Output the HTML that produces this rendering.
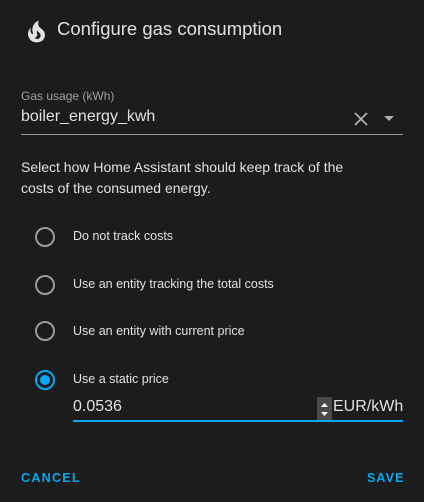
<!DOCTYPE html>
<html><head><style>
body{margin:0;width:424px;height:502px;background:#1c1c1c;font-family:"Liberation Sans",sans-serif;color:#e1e1e1;position:relative;overflow:hidden}
.a{position:absolute;white-space:nowrap}
.radio{position:absolute;left:35px;width:16px;height:16px;border:2px solid #9b9b9b;border-radius:50%}
.lab{position:absolute;left:73px;font-size:12.5px;color:#e1e1e1}
</style></head><body>
<svg class="a" style="left:22px;top:17px" width="29" height="29" viewBox="0 0 24 24"><path fill="#e1e1e1" d="M17.66 11.2c-.23-.3-.51-.56-.77-.82-.67-.6-1.430-1.030-2.070-1.660C13.33 7.26 13 4.85 13.95 3c-.95.23-1.780.75-2.490 1.320-2.590 2.080-3.610 5.750-2.390 8.900.04.1.08.2.08.33 0 .22-.15.42-.35.5-.23.1-.47.04-.66-.12a.58.58 0 0 1-.14-.17c-1.130-1.430-1.310-3.480-.55-5.120C5.780 10 4.870 12.300 5 14.470c.06.5.12 1 .29 1.500.14.6.41 1.200.71 1.730 1.080 1.730 2.950 2.970 4.960 3.220 2.140.27 4.430-.12 6.070-1.600 1.830-1.660 2.470-4.320 1.530-6.600l-.13-.26c-.21-.46-.77-1.260-.77-1.260m-3.160 6.300c-.28.24-.74.5-1.100.6-1.120.4-2.240-.16-2.900-.82 1.190-.28 1.900-1.160 2.110-2.050.17-.8-.15-1.460-.28-2.230-.12-.74-.1-1.370.17-2.060.19.38.39.76.63 1.060.77 1 1.980 1.440 2.240 2.800.04.14.06.28.06.43.03.82-.33 1.720-.93 2.270z"/></svg>
<div class="a" style="left:57px;top:18px;font-size:18.5px;color:#e1e1e1">Configure gas consumption</div>
<div class="a" style="left:21px;top:89px;font-size:12px;color:#a0a0a0">Gas usage (kWh)</div>
<div class="a" style="left:21px;top:108px;font-size:16px;color:#e1e1e1">boiler_energy_kwh</div>
<svg class="a" style="left:353px;top:111px" width="16" height="16" viewBox="0 0 16 16"><path d="M2 2L14 14M14 2L2 14" stroke="#b0b0b0" stroke-width="1.8"/></svg>
<svg class="a" style="left:384px;top:116px" width="10" height="6"><path d="M0 0H10L5 5Z" fill="#b0b0b0"/></svg>
<div class="a" style="left:21px;top:134px;width:382px;height:1px;background:#9a9a9a"></div>
<div class="a" style="left:21px;top:157px;font-size:14px;line-height:21px;white-space:normal;width:355px">Select how Home Assistant should keep track of the costs of the consumed energy.</div>
<div class="radio" style="top:227px"></div><div class="lab" style="top:229px">Do not track costs</div>
<div class="radio" style="top:275px"></div><div class="lab" style="top:277px">Use an entity tracking the total costs</div>
<div class="radio" style="top:321px"></div><div class="lab" style="top:324px">Use an entity with current price</div>
<div class="radio" style="top:370px;border-color:#03a9f4"><div style="position:absolute;left:3px;top:3px;width:10px;height:10px;border-radius:50%;background:#03a9f4"></div></div>
<div class="lab" style="top:372px">Use a static price</div>
<div class="a" style="left:73px;top:398px;font-size:16px;color:#e1e1e1">0.0536</div>
<div class="a" style="left:317px;top:397px;width:15px;height:24px;background:#4a4a4a"><svg width="15" height="24"><path d="M4 10L7.5 6L11 10Z M4 15L7.5 19L11 15Z" fill="#fff"/></svg></div>
<div class="a" style="left:333px;top:398px;font-size:16px;color:#e1e1e1">EUR/kWh</div>
<div class="a" style="left:73px;top:420px;width:330px;height:2px;background:#03a9f4"></div>
<div class="a" style="left:21px;top:471px;font-size:12.5px;font-weight:bold;letter-spacing:1.3px;color:#03a9f4">CANCEL</div>
<div class="a" style="left:367px;top:471px;font-size:12.5px;font-weight:bold;letter-spacing:1.1px;color:#03a9f4">SAVE</div>
</body></html>
